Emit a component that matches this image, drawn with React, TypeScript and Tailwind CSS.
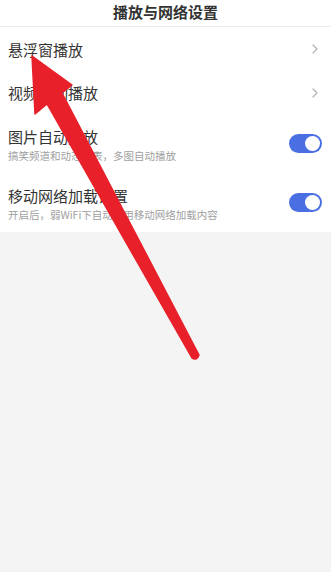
import React from "react";

const font = { fontFamily: '"Noto Sans CJK SC", "Noto Sans", sans-serif' };

function Chevron() {
  return (
    <svg width="8" height="12" viewBox="0 0 8 12" className="text-[#b8b8b8]">
      <path d="M2 2l4 4-4 4" fill="none" stroke="currentColor" strokeWidth="1.4" strokeLinecap="round" strokeLinejoin="round" />
    </svg>
  );
}

function Toggle() {
  return (
    <div className="flex h-[19px] w-[33px] items-center justify-end rounded-full bg-[#4a6fe3] p-[2px]">
      <div className="h-[15px] w-[15px] rounded-full bg-white" />
    </div>
  );
}

function LinkRow({ title, h }: { title: string; h: string }) {
  return (
    <div className={`flex ${h} items-center justify-between pl-2 pr-[12px]`}>
      <span className="text-[15px] leading-none text-[#333]">{title}</span>
      <Chevron />
    </div>
  );
}

function SwitchRow({ title, sub }: { title: string; sub: string }) {
  return (
    <div className="flex h-[59px] items-center justify-between pl-2 pr-[9px]">
      <div className="flex flex-col gap-[7px] pt-[3px]">
        <span className="text-[15px] leading-none text-[#333]">{title}</span>
        <span className="text-[10.5px] leading-none text-[#a0a0a0]">{sub}</span>
      </div>
      <Toggle />
    </div>
  );
}

export default function App() {
  return (
    <div className="relative h-[572px] w-[331px] overflow-hidden bg-[#f4f4f4]" style={font}>
      <div className="flex h-[27px] items-center justify-center border-b border-[#ececec] bg-white pb-[3px]">
        <span className="text-[15px] font-bold leading-none text-[#333]">播放与网络设置</span>
      </div>
      <div className="bg-white">
        <LinkRow title="悬浮窗播放" h="h-[44px]" />
        <LinkRow title="视频自动播放" h="h-[43px]" />
        <SwitchRow title="图片自动播放" sub="搞笑频道和动态列表，多图自动播放" />
        <SwitchRow title="移动网络加载设置" sub="开启后，弱WiFi下自动使用移动网络加载内容" />
      </div>

      {/* annotation arrow */}
      <svg className="absolute left-0 top-0" width="331" height="572" viewBox="0 0 331 572">
        <path
          d="M32 56 L72 85 L62 93 L199 355 Q197 361 192 358 L47 104 L35 114 Z"
          fill="#e8202a"
          stroke="#e8202a"
          strokeWidth="1.5"
          strokeLinejoin="round"
        />
      </svg>
    </div>
  );
}
